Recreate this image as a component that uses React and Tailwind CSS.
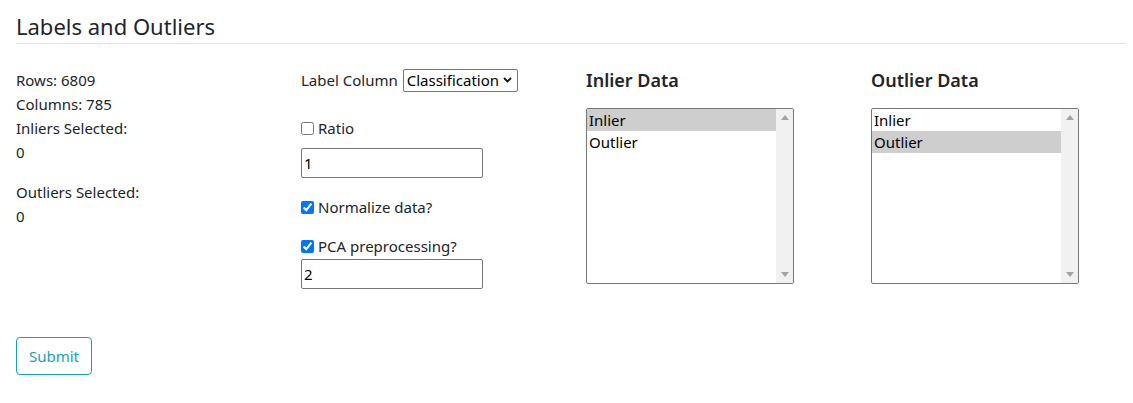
import React from "react";

function Listbox({ selected }) {
  const items = ["Inlier", "Outlier"];
  return (
    <div className="flex w-[208px] h-[176px] border border-[#767676] rounded-[2px] bg-white overflow-hidden">
      <div className="flex-1 pt-0">
        {items.map((it) => (
          <div
            key={it}
            className={`h-[22px] leading-[22px] pl-[2px] text-[15px] text-black ${
              it === selected ? "bg-[#cecece]" : ""
            }`}
          >
            {it}
          </div>
        ))}
      </div>
      <div className="w-[17px] bg-[#f1f1f1] flex flex-col items-center justify-between py-[6px]">
        <svg width="8" height="5" viewBox="0 0 8 5">
          <path d="M0 5 L4 0 L8 5 Z" fill="#a3a3a3" />
        </svg>
        <svg width="8" height="5" viewBox="0 0 8 5">
          <path d="M0 0 L8 0 L4 5 Z" fill="#a3a3a3" />
        </svg>
      </div>
    </div>
  );
}

export default function App() {
  return (
    <div
      className="bg-white text-[#212529] text-[15px] leading-[24px] px-[16px] pr-[7px]"
      style={{ fontFamily: '"Noto Sans", "Open Sans", sans-serif' }}
    >
      <div className="pt-[12px] pb-[3px] border-b border-[#e3e3e3]">
        <h3 className="text-[22px] leading-[28px] font-normal">Labels and Outliers</h3>
      </div>

      <div className="grid grid-cols-[285px_285px_285px_1fr] pt-[24px]">
        <div>
          <div>Rows: 6809</div>
          <div>Columns: 785</div>
          <div>Inliers Selected:</div>
          <div className="mb-[16px]">0</div>
          <div>Outliers Selected:</div>
          <div>0</div>
        </div>

        <div>
          <div className="flex items-center h-[24px]">
            <span>Label Column</span>
            <div className="ml-[5px] flex items-center h-[23px] border border-[#767676] rounded-[2px] pl-[3px] pr-[5px] text-black">
              <span>Classification</span>
              <svg width="9" height="6" viewBox="0 0 9 6" className="ml-[4px]">
                <path d="M1 1 L4.5 4.5 L8 1" fill="none" stroke="#111" strokeWidth="1.8" />
              </svg>
            </div>
          </div>
          <label className="flex items-center h-[24px] mt-[24px]">
            <input type="checkbox" className="w-[13px] h-[13px] m-0 mr-[4px]" />
            <span>Ratio</span>
          </label>
          <div className="mt-[8px] w-[182px] h-[30px] border border-[#767676] rounded-[2px] pl-[2px] flex items-center text-black">
            1
          </div>
          <label className="flex items-center h-[24px] mt-[17px]">
            <input type="checkbox" defaultChecked className="w-[13px] h-[13px] m-0 mr-[4px] accent-[#0075ff]" />
            <span>Normalize data?</span>
          </label>
          <label className="flex items-center h-[24px] mt-[15px]">
            <input type="checkbox" defaultChecked className="w-[13px] h-[13px] m-0 mr-[4px] accent-[#0075ff]" />
            <span>PCA preprocessing?</span>
          </label>
          <div className="mt-[1px] w-[182px] h-[30px] border border-[#767676] rounded-[2px] pl-[2px] flex items-center text-black">
            2
          </div>
        </div>

        <div>
          <h5 className="text-[18px] leading-[24px] font-semibold mb-[16px]">Inlier Data</h5>
          <Listbox selected="Inlier" />
        </div>

        <div>
          <h5 className="text-[18px] leading-[24px] font-semibold mb-[16px]">Outlier Data</h5>
          <Listbox selected="Outlier" />
        </div>
      </div>

      <div className="pt-[48px] pb-[28px]">
        <button className="w-[76px] h-[38px] border border-[#17a2b8] rounded-[4px] text-[#17a2b8] text-[15px]">
          Submit
        </button>
      </div>
    </div>
  );
}
